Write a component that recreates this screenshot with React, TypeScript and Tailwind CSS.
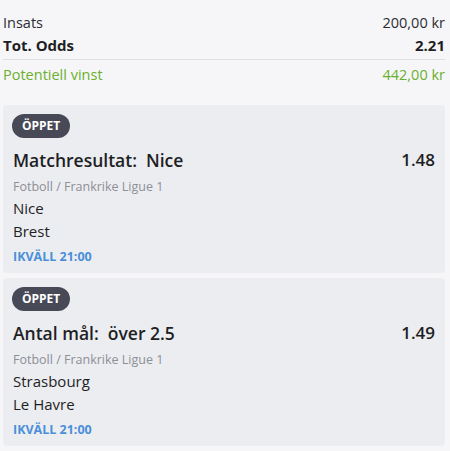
import React from "react";

type Bet = { market: string; odds: string; league: string; home: string; away: string; time: string };

const bets: Bet[] = [
  { market: "Matchresultat:\u00a0 Nice", odds: "1.48", league: "Fotboll / Frankrike Ligue 1", home: "Nice", away: "Brest", time: "IKVÄLL 21:00" },
  { market: "Antal mål:\u00a0 över 2.5", odds: "1.49", league: "Fotboll / Frankrike Ligue 1", home: "Strasbourg", away: "Le Havre", time: "IKVÄLL 21:00" },
];

function Card({ b }: { b: Bet }) {
  return (
    <div className="ml-[3px] mr-[5px] rounded-[4px] bg-[#ecedf1] pl-[9px] pr-[10px] pt-[9px] pb-[7px] flex flex-col">
      <div className="self-start h-[24px] px-[10px] rounded-full bg-[#474a56] text-white text-[12px] font-bold leading-[24px]">ÖPPET</div>
      <div className="mt-[10px] flex justify-between items-center h-[24px] pl-[1px]">
        <span className="text-[17.5px] font-semibold leading-[24px] text-[#1e1f24]">{b.market}</span>
        <span className="text-[17px] font-semibold leading-[24px] text-[#1e1f24]">{b.odds}</span>
      </div>
      <div className="pl-[1px] mt-[6px] text-[12.5px] leading-[18px] text-[#8d8f96]">{b.league}</div>
      <div className="pl-[1px] mt-[1px] text-[15px] leading-[23px] text-[#1e1f24]">{b.home}</div>
      <div className="pl-[1px] text-[15px] leading-[23px] text-[#1e1f24]">{b.away}</div>
      <div className="pl-[1px] mt-[5px] text-[12.5px] font-bold leading-[18px] text-[#4a8fd8]">{b.time}</div>
    </div>
  );
}

export default function App() {
  return (
    <div className="w-[450px] h-[451px] bg-[#f6f6f8] overflow-hidden" style={{ fontFamily: '"Open Sans", "Noto Sans", sans-serif' }}>
      <div className="pt-[11px] pl-[3px] pr-[5px]">
        <div className="flex justify-between text-[14.5px] leading-[23px] text-[#2c2d33]">
          <span>Insats</span>
          <span>200,00 kr</span>
        </div>
        <div className="flex justify-between text-[15px] font-bold leading-[23px] text-[#1e1f24]">
          <span>Tot. Odds</span>
          <span>2.21</span>
        </div>
        <div className="mt-[2px] border-t border-[#dfe0e4]" />
        <div className="mt-[3px] flex justify-between text-[14.5px] leading-[23px] text-[#6bb02e]">
          <span>Potentiell vinst</span>
          <span>442,00 kr</span>
        </div>
      </div>
      <div className="mt-[19px] flex flex-col gap-[5px]">
        {bets.map((b, i) => (
          <Card key={i} b={b} />
        ))}
      </div>
    </div>
  );
}
